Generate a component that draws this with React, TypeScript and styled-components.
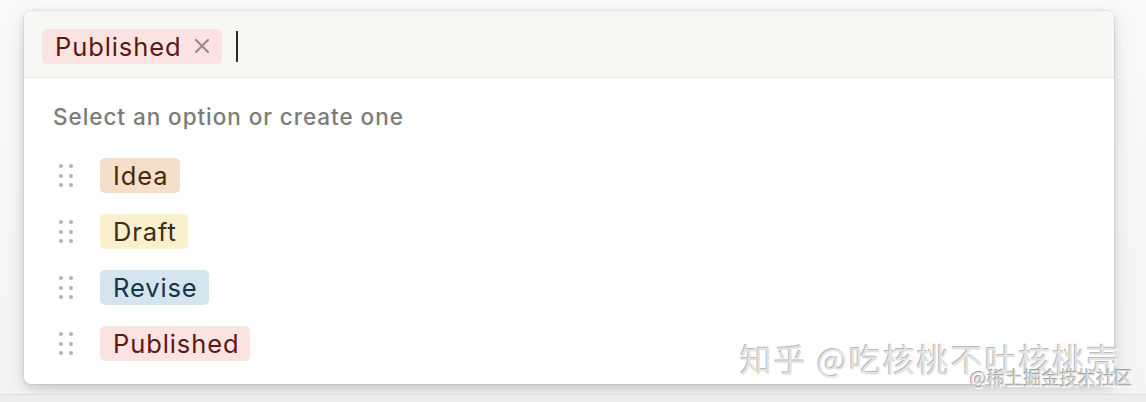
import React from "react";
import styled, { createGlobalStyle } from "styled-components";

const GlobalStyle = createGlobalStyle`
  html, body {
    margin: 0;
    padding: 0;
    background: #f7f7f7;
  }
  body {
    font-family: Inter, "Liberation Sans", sans-serif;
    -webkit-font-smoothing: antialiased;
  }
`;

type TagTone = "brown" | "yellow" | "blue" | "red";

const tones: Record<TagTone, { bg: string; fg: string }> = {
  brown: { bg: "#f4dfcb", fg: "#48280f" },
  yellow: { bg: "#fbf0cd", fg: "#402c1b" },
  blue: { bg: "#d4e5ef", fg: "#183347" },
  red: { bg: "#fbe3e1", fg: "#5d1715" },
};

const Page = styled.div`
  position: relative;
  width: 1146px;
  height: 402px;
  padding: 11px 32px 0 24px;
  box-sizing: border-box;
  overflow: hidden;
  background: linear-gradient(#f9f9f9, #f5f5f5);
`;

const BottomStrip = styled.div`
  position: absolute;
  left: 0;
  right: 0;
  bottom: 0;
  height: 7px;
  background: #ececec;
  border-top: 1px solid #dcdcdc;
`;

const Card = styled.div`
  width: 1090px;
  height: 373px;
  background: #ffffff;
  border-radius: 7px;
  box-shadow: 0 0 0 1px rgba(15, 15, 15, 0.06), 0 3px 8px rgba(15, 15, 15, 0.12),
    0 9px 24px rgba(15, 15, 15, 0.1);
  overflow: hidden;
  display: flex;
  flex-direction: column;
`;

const InputBar = styled.div`
  height: 67px;
  box-sizing: border-box;
  background: #f7f7f5;
  border-bottom: 1px solid #e7e7e5;
  display: flex;
  align-items: center;
  padding: 4px 0 0 18px;
  gap: 14px;
`;

const Tag = styled.span<{ $tone: TagTone }>`
  display: inline-flex;
  align-items: center;
  height: 35px;
  padding: 0 11px 0 13px;
  border-radius: 5px;
  background: ${(p) => tones[p.$tone].bg};
  color: ${(p) => tones[p.$tone].fg};
  font-size: 25.5px;
  letter-spacing: 0.9px;
  white-space: nowrap;
`;

const RemoveX = styled.span`
  display: inline-flex;
  margin-left: 12px;
  width: 18px;
  height: 18px;
  color: #a08a89;
`;

const Caret = styled.span`
  width: 2px;
  height: 31px;
  background: #2b2b2b;
`;

const Body = styled.div`
  display: flex;
  flex-direction: column;
  padding: 24px 0 0 29px;
`;

const Hint = styled.div`
  color: #7c7b78;
  font-size: 22.5px;
  font-weight: 500;
  letter-spacing: 0.95px;
  line-height: 30px;
  margin-bottom: 26px;
`;

const OptionList = styled.div`
  display: flex;
  flex-direction: column;
  gap: 21px;
`;

const OptionRow = styled.div`
  display: flex;
  align-items: center;
  gap: 27px;
  height: 35px;
`;

const Handle = styled.div`
  display: grid;
  grid-template-columns: repeat(2, 4px);
  grid-template-rows: repeat(3, 4px);
  column-gap: 6px;
  row-gap: 5.5px;
  padding-left: 6px;
  span {
    width: 4px;
    height: 4px;
    border-radius: 50%;
    background: #b3b3b1;
  }
`;

const Watermark = styled.div`
  position: absolute;
  left: 740px;
  top: 335px;
  font-family: "Noto Sans CJK SC", sans-serif;
  font-size: 32px;
  letter-spacing: 1.9px;
  color: #e3e3e3;
  text-shadow: -1px -1px 0 #b9b9b9, 1px 1px 0 #ffffff;
  white-space: nowrap;
`;

const WatermarkSub = styled.div`
  position: absolute;
  left: 970px;
  top: 364px;
  font-family: "Noto Sans CJK SC", sans-serif;
  font-size: 18px;
  letter-spacing: 0.2px;
  color: #d9d9d9;
  text-shadow: -1px -1px 0 #9f9f9f, 1px 1px 0 #ffffff;
  white-space: nowrap;
`;

const options: { label: string; tone: TagTone }[] = [
  { label: "Idea", tone: "brown" },
  { label: "Draft", tone: "yellow" },
  { label: "Revise", tone: "blue" },
  { label: "Published", tone: "red" },
];

const DragHandle = () => (
  <Handle>
    {Array.from({ length: 6 }).map((_, i) => (
      <span key={i} />
    ))}
  </Handle>
);

export default function App() {
  return (
    <>
      <GlobalStyle />
      <Page>
        <Card>
          <InputBar>
            <Tag $tone="red">
              Published
              <RemoveX>
                <svg viewBox="0 0 18 18" width="18" height="18">
                  <path
                    d="M3 3 L15 15 M15 3 L3 15"
                    stroke="currentColor"
                    strokeWidth="2.2"
                    strokeLinecap="round"
                  />
                </svg>
              </RemoveX>
            </Tag>
            <Caret />
          </InputBar>
          <Body>
            <Hint>Select an option or create one</Hint>
            <OptionList>
              {options.map((o) => (
                <OptionRow key={o.label}>
                  <DragHandle />
                  <Tag $tone={o.tone}>{o.label}</Tag>
                </OptionRow>
              ))}
            </OptionList>
          </Body>
        </Card>
        <BottomStrip />
        <Watermark>知乎 @吃核桃不吐核桃壳</Watermark>
        <WatermarkSub>@稀土掘金技术社区</WatermarkSub>
      </Page>
    </>
  );
}
